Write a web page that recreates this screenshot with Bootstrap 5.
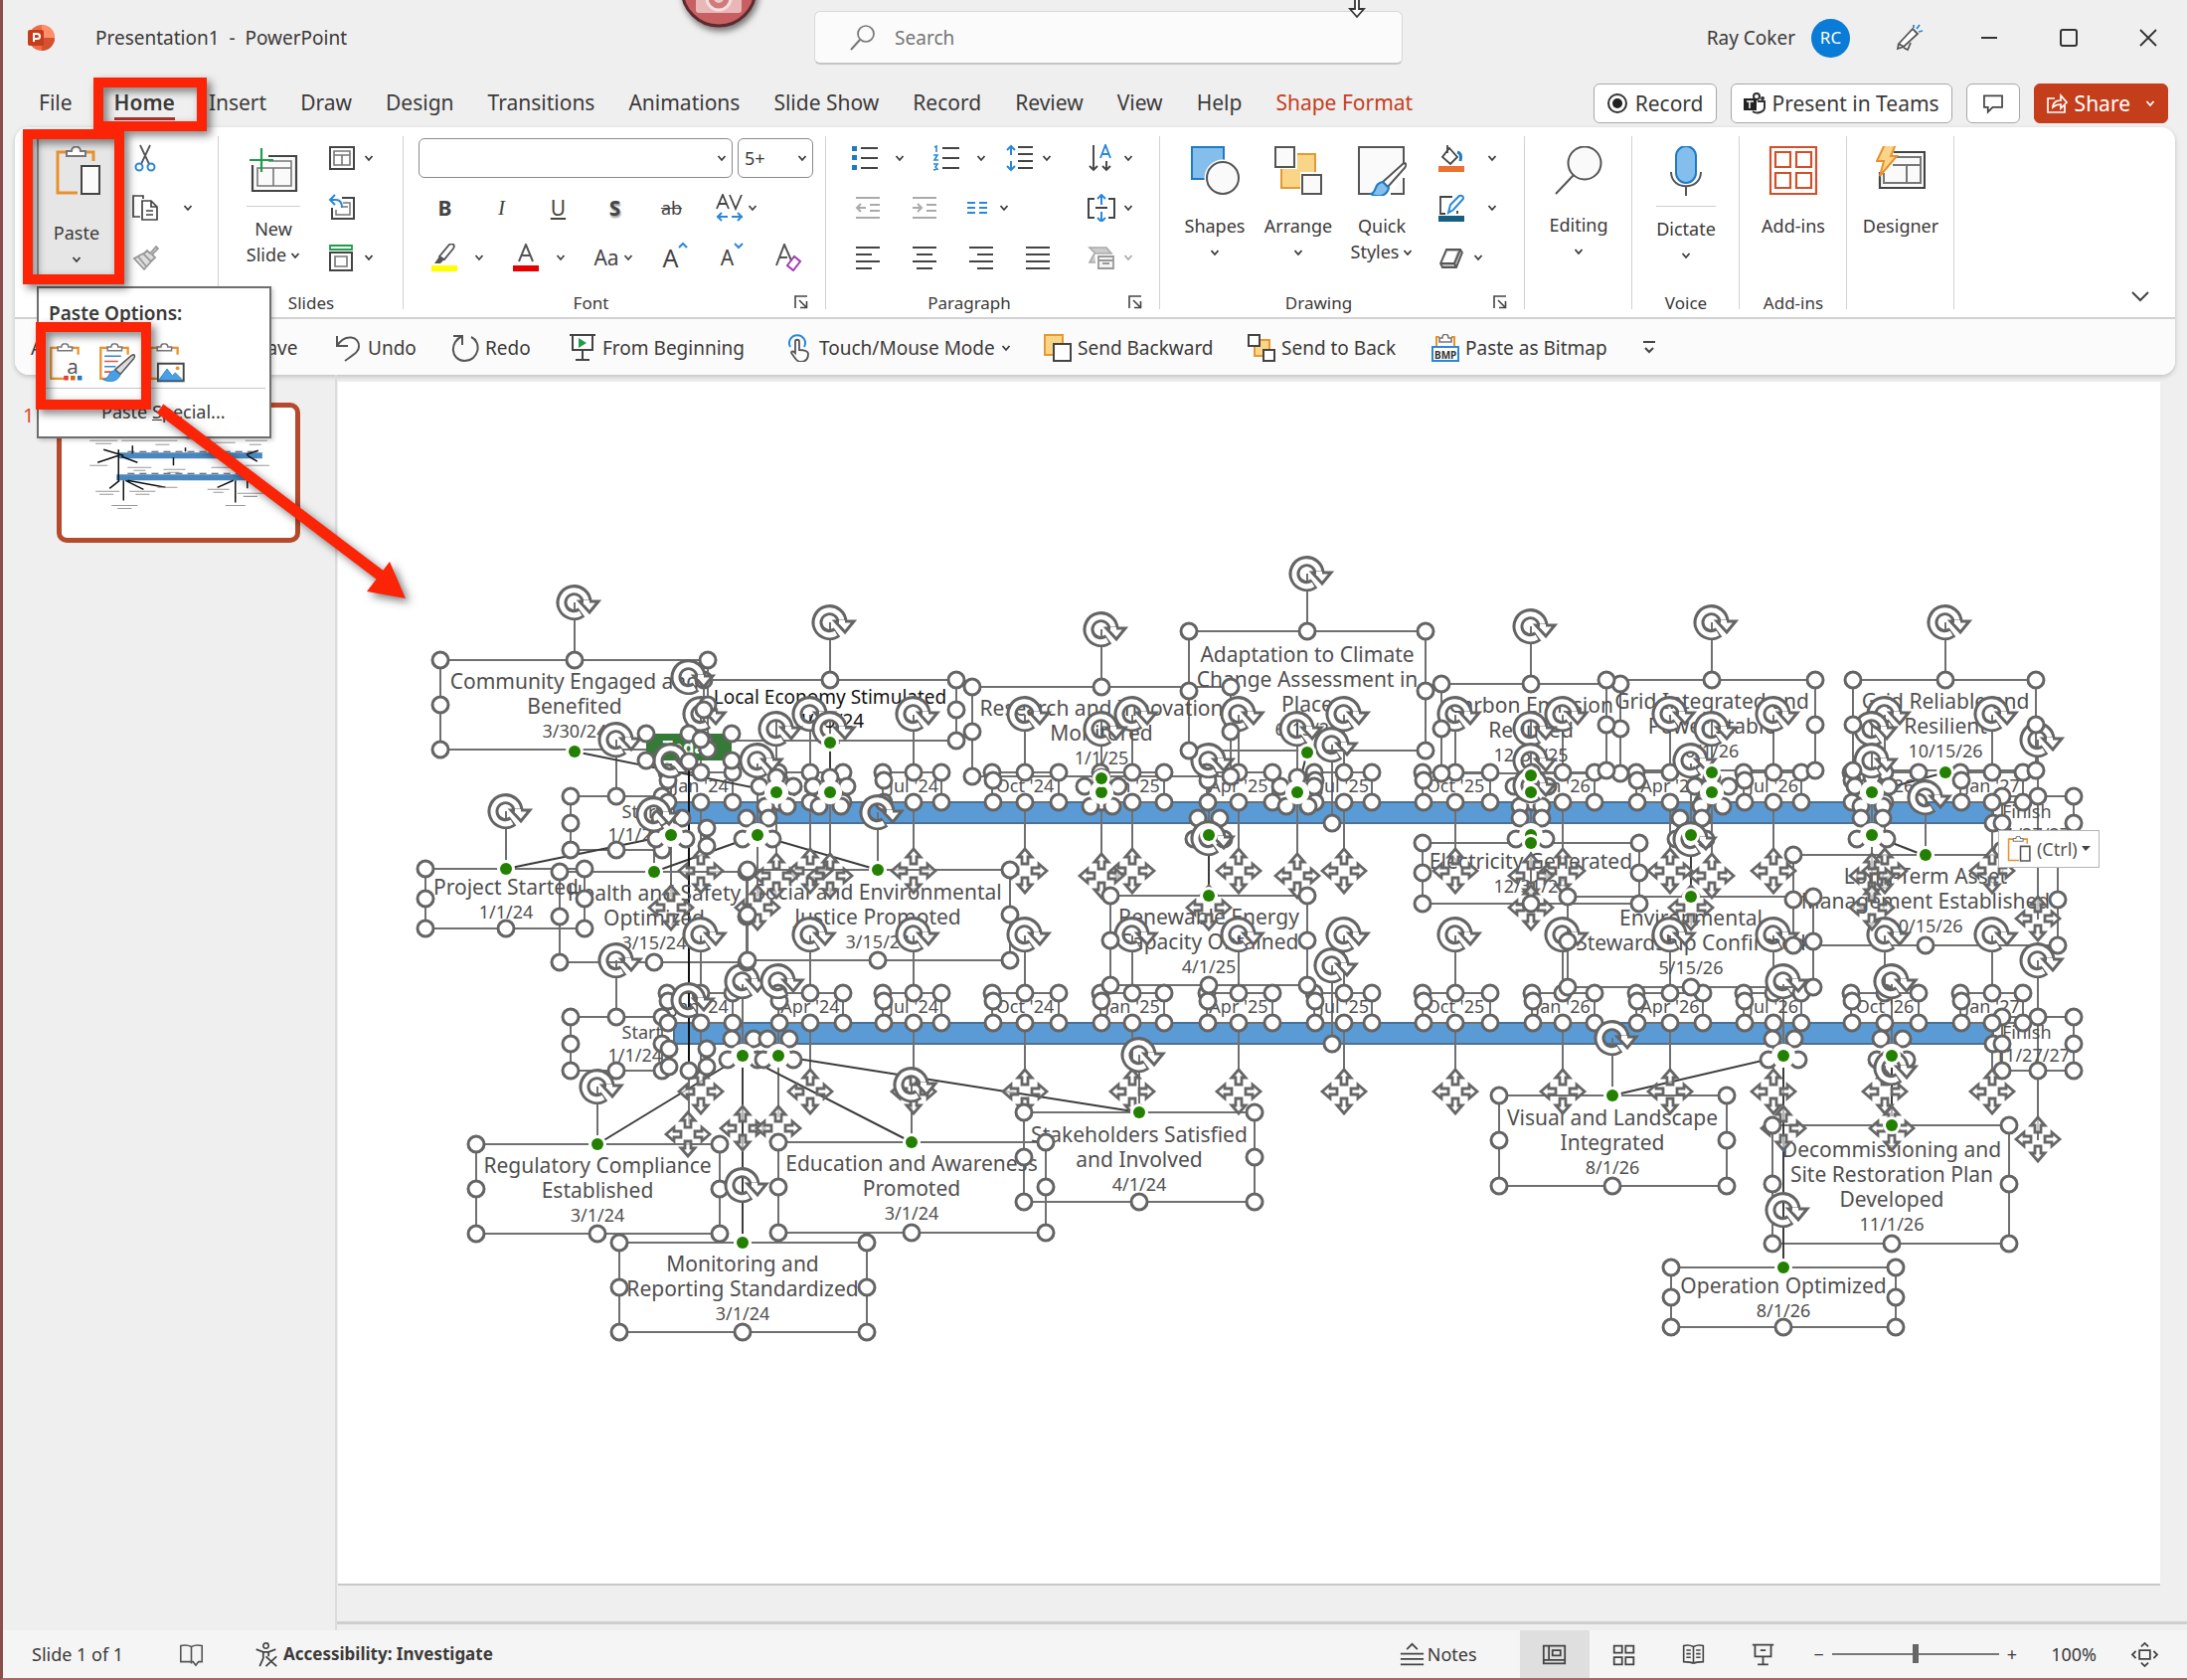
<!DOCTYPE html>
<html lang="en">
<head>
<meta charset="utf-8">
<meta name="viewport" content="width=device-width, initial-scale=1">
<title>Presentation1 - PowerPoint</title>
<link href="https://cdn.jsdelivr.net/npm/bootstrap@5.3.0/dist/css/bootstrap.min.css" rel="stylesheet">
<style>
:root{--ink:#3b3a39;--line:#d2d2d2;--brand:#c43e1c}
body{font-family:"Noto Sans","Open Sans",sans-serif;font-size:18px;line-height:26px;color:var(--ink);background:#efefef;border-left:3px solid #8a4f4d;border-bottom:2px solid #a86a68;min-height:100vh;overflow-x:hidden}
button{font:inherit;color:inherit;background:none;border:0;padding:0}
svg{display:block;flex:none;overflow:visible}
.defs{position:absolute}
.ico{width:28px;height:28px}
.big{width:50px;height:50px}
.chev{width:10px;height:10px}
.title-bar{height:76px;padding-left:24px;font-size:19px}
.doc-name{margin-left:41px;white-space:pre}
.search-wrap{width:592px;height:54px;background:#fbfbfb;border:1px solid #d8d8d8;border-bottom:2px solid #c4c4c4;border-radius:6px;padding-left:34px;margin-left:470px}
.search-wrap input{border:0;background:none;outline:0;color:#666;font-size:19px;width:400px}
.avatar{width:39px;height:39px;border-radius:50%;background:#0a7bd6;color:#fff;font-size:17px}
.win-btns{gap:52px;margin:0 25px 0 46px}
.tab-row{height:52px;padding:4px 19px 0 36px}
.tabs{gap:34px}
.tabs a{color:var(--ink);text-decoration:none;font-size:21px;line-height:30px}
.tabs .on{font-weight:600;border-bottom:3px solid #a33;margin-left:8px}
.tabs .ctx{color:var(--brand)}
.tab-actions{gap:14px}
.pill{height:40px;background:#fff;border:1px solid #a8a8a8;border-radius:6px;padding:0 12px;font-size:21px;gap:7px}
.pill.share{background:var(--brand);border-color:var(--brand);color:#fff}
.ribbon{margin:0 12px;background:#fff;border-radius:14px;box-shadow:0 2px 5px rgba(0,0,0,.2);height:249px}
.ribbon-main{height:193px;padding-top:6px;border-bottom:2px solid var(--line)}
.grp{position:relative;height:183px;flex:none}
.grp::after{content:"";position:absolute;right:0;top:3px;bottom:6px;width:1px;background:var(--line)}
.grp-name{text-align:center;line-height:24px;font-size:17px;margin-top:auto}
.launch{position:absolute;right:18px;bottom:6px}
.launch svg{width:14px;height:14px}
.r{height:50px;display:flex;align-items:center}
.r button{display:flex;align-items:center;justify-content:center;height:42px}
.w57{width:57px}.w82{width:82px;gap:16px}.w68{width:68px;gap:8px}.w73{width:73px;gap:4px}
.tall{display:flex;flex-direction:column;align-items:center;height:150px;padding-top:13px}
.tall .lab{margin-top:17px;line-height:26px;text-align:center}
.tall .low{margin-top:10px;border-top:1px solid #cfcfcf;padding-top:9px}
.tall .chev{margin-top:9px}
.lab .chev{display:inline-block;margin:0 0 2px 4px}
.g-clip{width:205px;padding-left:22px}.g-slides{width:186px}.g-font{width:425px}.g-para{width:336px}.g-draw{width:367px}.g-one{width:108px}
.paste-btn{width:78px;background:#e6e6e6;border-left:2px solid #999}
.paste-btn .big{margin-left:6px}
.paste-btn .lab{margin-top:24px}
.clip-col{margin-left:17px}
.new-btn{width:70px;margin:0 20px}
.draw-btn{width:84px}
.draw-row{padding-left:13px}
.draw-col{margin-left:14px}
.far{gap:22px}
.dim{color:#aaa}
.para-a{padding:0 22px 0 11px}.para-b{padding:0 22px 0 13px}
.font-a{padding:0 13px 0 15px;gap:5px}
.f-name,.f-size{height:40px;border:1px solid #8a8a8a;border-radius:6px;background:#fff;appearance:none;padding:0 6px;color:var(--ink);width:100%}
.combo{position:relative;width:316px}.combo.sm-box{width:76px}.combo .chev{position:absolute;right:6px;top:15px;pointer-events:none}
.glyph{font-size:21px;color:#444;padding-left:13px}
.ital{font-family:"Liberation Serif",serif}
.shade{text-shadow:1px 2px 2px #999}
.strike{font-size:18px}
.grow-a{font-size:25px}
.collapse-btn{margin:0 26px 12px 0}
.qat{height:56px;padding:2px 0 0 16px;font-size:19px;background:#fbfbfb;border-radius:0 0 14px 14px}
.qat button{display:flex;align-items:center;gap:6px}
.q1{width:227px}.q2{width:78px}.q3{width:118px}.q4{width:218px}.q5{width:260px}.q6{width:205px}.q7{width:185px}.q8{width:212px}
.work{flex:1 1 auto;min-height:0}
.pane{width:336px;border-right:2px solid #dcdcdc;padding:28px 35px 0 14px}
.s-num{color:#e0452c;width:40px;font-size:20px;padding-left:6px}
.thumb{width:245px;border:5px solid #b54a2c;border-radius:10px;background:#fff;overflow:hidden}
.thumb svg{width:100%;height:auto}
.stage{flex:1 1 auto;padding:7px 27px 0 1px;border-bottom:3px solid #cfcfcf;margin-bottom:6px}
.slide{position:relative;background:#fff;border-bottom:2px solid #c8c8c8}
.slide>svg{width:100%;height:auto}
.slide text{font-size:21px;fill:#505050;text-anchor:middle}
.slide text.dt,.slide text.tick{font-size:18px}
.slide text.own{font-size:19px;fill:#111}
.slide text.today{fill:#fff;font-weight:700}
.slide text.lt{text-anchor:start}.slide text.rt{text-anchor:end}
.ctrl-btn{position:absolute;left:91.1%;top:37.3%;width:102px;height:38px;background:#fff;border:1px solid #b5b5b5;display:flex;align-items:center;justify-content:center;gap:4px;font-size:18px;color:#555}
.status{height:48px;background:#f5f5f5;font-size:18px;padding-left:29px}
.count{width:148px}
.a11y{margin-left:50px;gap:5px;font-weight:700;font-size:17px}
.notes{gap:3px;margin-right:43px}
.status .view{width:70px;height:48px;display:flex;align-items:center;justify-content:center}
.status .view.on{background:#dfdfdf}
.status .ico{width:25px;height:25px}
.minus{margin-left:16px}
.pct{margin:0 36px 0 34px}
.status .fit{margin-right:30px}
.zoom-range{width:168px;height:20px;appearance:none;background:none}
.zoom-range::-webkit-slider-runnable-track{height:2px;background:#777}
.zoom-range::-webkit-slider-thumb{appearance:none;width:6px;height:19px;margin-top:-9px;background:#666;border:0}
.paste-menu{position:absolute;left:37px;top:288px;width:236px;height:153px;background:#fff;border:2px solid #6e6e6e;z-index:3;padding:12px 4px 0;box-shadow:2px 2px 4px rgba(0,0,0,.2)}
.paste-menu h6{font-size:19px;line-height:26px;margin:0 0 17px 6px;font-weight:600}
.paste-menu .opts{gap:12px;padding:0 0 5px 6px;border-bottom:1px solid #c8c8c8}
.paste-menu .opts svg{width:38px;height:40px}
.paste-menu .sp{margin-left:59px;margin-top:9px;line-height:28px}
.marks{position:absolute;left:0;top:0;width:420px;height:620px;z-index:4;pointer-events:none}
.marks g{filter:drop-shadow(4px 4px 4px rgba(0,0,0,.5))}
.cam{position:absolute;left:684px;top:-50px;width:78px;height:78px;z-index:4;filter:drop-shadow(2px 4px 3px rgba(0,0,0,.5))}
.cur{position:absolute;left:1356px;top:0;width:18px;height:18px;z-index:4}
</style>
<script src="https://cdn.jsdelivr.net/npm/bootstrap@5.3.0/dist/js/bootstrap.bundle.min.js"></script>
</head>
<body class="d-flex flex-column">
<svg class="defs" width="0" height="0" aria-hidden="true">
<defs>
<symbol id="chev" viewBox="0 0 10 10"><path d="M1.5 3 5 7l3.5-4" fill="none" stroke="currentColor" stroke-width="1.8"/></symbol>
<symbol id="up" viewBox="0 0 10 10"><path d="M1 7l4-4 4 4" fill="none" stroke="#2b88d8" stroke-width="2"/></symbol>
<symbol id="down" viewBox="0 0 10 10"><path d="M1 3l4 4 4-4" fill="none" stroke="#2b88d8" stroke-width="2"/></symbol>
<symbol id="launch" viewBox="0 0 14 14"><path d="M1 13V1h12M5 5l7 7M12.5 6v6.5H6" fill="none" stroke="#444" stroke-width="1.6"/></symbol>
<symbol id="clip" viewBox="0 0 50 50"><path d="M12 6H3v41h20M31 6h8v9" fill="none" stroke="#e8912d" stroke-width="3"/><path d="M12 10V5h5c0-6 9-6 9 0h5v5z" fill="#fff" stroke="#777" stroke-width="2"/></symbol>
<symbol id="cut" viewBox="0 0 28 28"><path d="M9 1l9 19M19 1l-9 19" stroke="#555" stroke-width="1.8" fill="none"/><circle cx="8" cy="23" r="3.5" fill="none" stroke="#2b88d8" stroke-width="2"/><circle cx="20" cy="23" r="3.5" fill="none" stroke="#2b88d8" stroke-width="2"/></symbol>
<symbol id="copy" viewBox="0 0 28 28"><path d="M12 5V2H2v21h7M11 7h9l6 6v13H11zM20 7v6h6M15 17h7M15 21h7" fill="none" stroke="#444" stroke-width="1.7"/></symbol>
<symbol id="brush" viewBox="0 0 28 28"><path d="M3 15l9-5 8 8-7 8zM13 10l3-3 3 3 6-7 2 2-6 6 3 3-4 4M7 13l8 10" fill="#ddd" stroke="#999" stroke-width="1.8"/></symbol>
<symbol id="newslide" viewBox="0 0 50 50"><path d="M20 10h28v35H4V19" fill="#fafafa" stroke="#444" stroke-width="2.2"/><path d="M20 15h23v25H9V22h34M25 22v18" fill="none" stroke="#777" stroke-width="1.6"/><path d="M13 2v24M1 14h24" stroke="#1f9c4c" stroke-width="2.2"/></symbol>
<symbol id="layout" viewBox="0 0 28 28"><path d="M2 3h24v22H2z" fill="none" stroke="#444" stroke-width="2"/><path d="M6 7h16v14H6zM6 11h16M14 11v10" fill="none" stroke="#777" stroke-width="1.6"/></symbol>
<symbol id="reset" viewBox="0 0 28 28"><path d="M14 4h12v21H4V14" fill="none" stroke="#444" stroke-width="2"/><path d="M15 9h7v12H8v-5M14 13h6" fill="none" stroke="#777" stroke-width="1.5"/><path d="M7 1 2 6l5 5M2 6h6c5 0 6 4 6 8" fill="none" stroke="#2b88d8" stroke-width="2"/></symbol>
<symbol id="section" viewBox="0 0 28 28"><path d="M2 2h22v4H2z" fill="none" stroke="#1f9c4c" stroke-width="1.8"/><path d="M2 9h22v18H2z" fill="none" stroke="#444" stroke-width="2"/><path d="M7 13h12v10H7z" fill="none" stroke="#777" stroke-width="1.6"/></symbol>
<symbol id="hilite" viewBox="0 0 28 28"><path d="M9 13 19 1c4-2 6 1 4 4L14 16z" fill="#fff" stroke="#555" stroke-width="1.8"/><path d="M9 13l-5 7h6l4-4z" fill="#555"/><path d="M1 22h26v7H1z" fill="#ff0"/></symbol>
<symbol id="fcolor" viewBox="0 0 28 28"><path d="M7 18 14 1l7 17M9.5 12h9" fill="none" stroke="#555" stroke-width="2"/><path d="M1 22h26v7H1z" fill="#e60000"/></symbol>
<symbol id="clearf" viewBox="0 0 28 28"><path d="M1 22 9 1l7 16M4 14h8" fill="none" stroke="#555" stroke-width="2"/><path d="M12 22l7-9 6 5-7 9z" fill="#fff" stroke="#a43cb4" stroke-width="2"/></symbol>
<symbol id="avsp" viewBox="0 0 28 28"><path d="M1 15 7 1l6 14M3 10h8M14 1l6 14 6-14" fill="none" stroke="#444" stroke-width="1.8"/><path d="M1 23h11M16 23h11M6 19l-4 4 4 4M22 19l4 4-4 4" fill="none" stroke="#2b88d8" stroke-width="2"/></symbol>
<symbol id="bul" viewBox="0 0 28 28"><path d="M1 2h5v5H1zM1 11h5v5H1zM1 21h5v5H1z" fill="#1b7ac4"/><path d="M10 4h17M10 14h17M10 24h17" stroke="#444" stroke-width="2"/></symbol>
<symbol id="num" viewBox="0 0 28 28"><path d="M2 3l2-1v6M1 11h4l-3 5h4M1 20h4l-2 3 2 2-4 1" fill="none" stroke="#2b88d8" stroke-width="1.6"/><path d="M10 4h17M10 14h17M10 24h17" stroke="#444" stroke-width="2"/></symbol>
<symbol id="spacing" viewBox="0 0 28 28"><path d="M5 3v8M5 25v-8M1 6l4-4 4 4M1 22l4 4 4-4" fill="none" stroke="#2b88d8" stroke-width="2"/><path d="M12 3h15M12 10h15M12 17h15M12 24h15" stroke="#444" stroke-width="2"/></symbol>
<symbol id="tdir" viewBox="0 0 28 28"><path d="M6 1v25M2 22l4 4 4-4M19 17v9M15 22l4 4 4-4" fill="none" stroke="#444" stroke-width="1.9"/><path d="M13 14 18 1l5 13M15 10h6" fill="none" stroke="#2b88d8" stroke-width="1.9"/></symbol>
<symbol id="ind" viewBox="0 0 28 28"><path d="M2 4h24M16 11h10M16 17h10M2 24h24M12 14H3M7 10l-4 4 4 4" fill="none" stroke="#aaa" stroke-width="2"/></symbol>
<symbol id="indr" viewBox="0 0 28 28"><path d="M2 4h24M16 11h10M16 17h10M2 24h24M2 14h9M7 10l4 4-4 4" fill="none" stroke="#aaa" stroke-width="2"/></symbol>
<symbol id="cols" viewBox="0 0 28 28"><path d="M4 9h8M4 14h8M4 19h8M16 9h8M16 14h8M16 19h8" stroke="#2b88d8" stroke-width="2"/></symbol>
<symbol id="valign" viewBox="0 0 28 28"><path d="M7 5H1v19h6M21 5h6v19h-6M8 14h12" fill="none" stroke="#444" stroke-width="2"/><path d="M14 1v10M14 28V18M10 5l4-4 4 4M10 24l4 4 4-4" fill="none" stroke="#2b88d8" stroke-width="2"/></symbol>
<symbol id="al" viewBox="0 0 28 28"><path d="M2 4h24M2 11h16M2 18h24M2 25h16" stroke="#444" stroke-width="2"/></symbol>
<symbol id="ac" viewBox="0 0 28 28"><path d="M2 4h24M6 11h16M2 18h24M6 25h16" stroke="#444" stroke-width="2"/></symbol>
<symbol id="ar" viewBox="0 0 28 28"><path d="M2 4h24M10 11h16M2 18h24M10 25h16" stroke="#444" stroke-width="2"/></symbol>
<symbol id="aj" viewBox="0 0 28 28"><path d="M2 4h24M2 11h24M2 18h24M2 25h24" stroke="#444" stroke-width="2"/></symbol>
<symbol id="smart" viewBox="0 0 28 28"><path d="M2 4h17l5 6H8zM7 10l-5 9h6" fill="#ccc" stroke="#aaa" stroke-width="1.6"/><path d="M11 13h15v12H11zM11 17h15M15 20h7" fill="#f4f4f4" stroke="#999" stroke-width="1.8"/></symbol>
<symbol id="shapes" viewBox="0 0 50 50"><path d="M2 1h32v32H2z" fill="#83beec" stroke="#1f7ac2" stroke-width="2"/><circle cx="33" cy="32" r="18.5" fill="#fff"/><circle cx="33" cy="32" r="16" fill="#fafafa" stroke="#555" stroke-width="2"/></symbol>
<symbol id="arrange" viewBox="0 0 50 50"><path d="M8 8h34v34H8z" fill="#fad587" stroke="#e39a31" stroke-width="2"/><path d="M0-1h24v24H0zM27 26h23v23H27z" fill="#fff"/><path d="M2 1h19v20H2zM29 29h19v19H29z" fill="#fafafa" stroke="#555" stroke-width="2"/></symbol>
<symbol id="quick" viewBox="0 0 50 50"><path d="M47 20V1H2v47h12M34 48h13V32" fill="#fafafa" stroke="#555" stroke-width="2"/><path d="M26 36 46 18c4-2 4 1 2 4L31 41z" fill="#fff" stroke="#555" stroke-width="2"/><path d="M14 48c6-1 3-11 12-12l6 6c-2 9-12 10-18 6z" fill="#83beec" stroke="#1f7ac2" stroke-width="2"/></symbol>
<symbol id="fill" viewBox="0 0 28 28"><path d="M12 4l8 9-7 7-8-7zM10 1v8" fill="none" stroke="#444" stroke-width="1.8"/><path d="M20 8c4 1 4 5 3 9" fill="none" stroke="#1f7ac2" stroke-width="3"/><path d="M1 22h26v7H1z" fill="#e97132"/></symbol>
<symbol id="outl" viewBox="0 0 28 28"><path d="M15 3H3v17h5M20 17v3" fill="none" stroke="#444" stroke-width="1.8"/><path d="M11 19l2-8 9-9c4-1 5 2 3 4l-9 10z" fill="#fff" stroke="#2b88d8" stroke-width="2"/><path d="M1 22h26v7H1z" fill="#156082"/></symbol>
<symbol id="cube" viewBox="0 0 28 28"><path d="M3 20 9 6h14l2 3-6 15H5z" fill="#bbb" stroke="#555" stroke-width="1.8"/><path d="M3 20h14l6-14M17 20l2 4" fill="none" stroke="#555" stroke-width="1.8"/><path d="M5 19 10 8h10l-4 11z" fill="#fff"/></symbol>
<symbol id="lens" viewBox="0 0 50 50"><circle cx="31" cy="17" r="16.5" fill="#fafafa" stroke="#555" stroke-width="2"/><path d="M20 29 2 48" stroke="#555" stroke-width="2"/></symbol>
<symbol id="mic" viewBox="0 0 50 50"><rect x="15" y="0" width="20" height="37" rx="10" fill="#83beec" stroke="#1f7ac2" stroke-width="2"/><path d="M10 26c0 19 30 19 30 0M25 41v9" fill="none" stroke="#555" stroke-width="2"/></symbol>
<symbol id="addin" viewBox="0 0 50 50"><path d="M2 1h46v47H2zM7 6h15v15H7zM28 6h15v15H28zM7 27h15v15H7zM28 27h15v15H28z" fill="none" stroke="#d0502a" stroke-width="2.2"/></symbol>
<symbol id="design" viewBox="0 0 50 50"><path d="M18 6h31v36H4V26" fill="#fafafa" stroke="#444" stroke-width="2.2"/><path d="M19 11h26v26H8V27M17 19h28M31 19v18" fill="none" stroke="#777" stroke-width="2"/><path d="M9-2h11l-5 12h6L4 30l4-15H1z" fill="#fad587" stroke="#e8912d" stroke-width="2"/></symbol>
<symbol id="glass" viewBox="0 0 28 28"><circle cx="17" cy="10" r="8" fill="none" stroke="#777" stroke-width="1.7"/><path d="M11 16 2 26" stroke="#777" stroke-width="2"/></symbol>
<symbol id="undo" viewBox="0 0 28 28"><path d="M3 2v10h11M3 12C11-1 26 2 25 13c0 5-6 8-14 14" fill="none" stroke="#555" stroke-width="2"/></symbol>
<symbol id="redo" viewBox="0 0 28 28"><path d="M2 2h9v9M11 2C-2 8-1 26 13 27c15 0 18-19 7-24" fill="none" stroke="#555" stroke-width="2"/></symbol>
<symbol id="play" viewBox="0 0 28 28"><path d="M1 1h26M4 1v15h20V1M14 16v10M7 26h14" fill="#fff" stroke="#444" stroke-width="2"/><path d="M10 4l8 5-8 5z" fill="#1f9c4c"/></symbol>
<symbol id="touch" viewBox="0 0 28 28"><path d="M5 13a8 8 0 1 1 14 0" fill="none" stroke="#2b88d8" stroke-width="2"/><path d="M10 19V8c0-3 4-3 4 0v8c4 0 9 1 9 4 0 6-3 8-8 8-4 0-5-4-9-9 0-2 2-2 4 0z" fill="#fff" stroke="#555" stroke-width="1.8"/></symbol>
<symbol id="sback" viewBox="0 0 28 28"><path d="M1 1h18v20H1z" fill="#fad587" stroke="#e39a31" stroke-width="2"/><path d="M10 10h17v17H10z" fill="#fff" stroke="#444" stroke-width="2"/></symbol>
<symbol id="sback2" viewBox="0 0 28 28"><path d="M7 6h15v16H7z" fill="#fad587" stroke="#e39a31" stroke-width="2"/><path d="M1 1h11v11H1zM16 16h11v11H16z" fill="#fff" stroke="#444" stroke-width="2"/></symbol>
<symbol id="bmp" viewBox="0 0 28 28"><path d="M8 3H5v10M20 3h3v10" fill="none" stroke="#e8912d" stroke-width="2"/><path d="M8 8V4h3c0-5 6-5 6 0h3v4z" fill="#fff" stroke="#777" stroke-width="1.6"/><path d="M1 13h26v14H1z" fill="#fff" stroke="#2b88d8" stroke-width="2"/></symbol>
<g id="rot"><path d="M12 0A12.5 12.5 0 1 0 7 10" fill="none" stroke="#646464" stroke-width="11"/><path d="M12 0A12.5 12.5 0 1 0 6 11" fill="none" stroke="#fff" stroke-width="5"/><path d="M5-1h19L15 10z" fill="#fff" stroke="#646464" stroke-width="3"/><path d="M9-2h6v4H9z" fill="#fff"/></g>
<g id="mv"><g id="mva"><path d="M0-22l7 8H3v7h-6v-7h-4z" fill="#fff" fill-opacity=".6" stroke="#666" stroke-width="2.8"/></g><use href="#mva" transform="rotate(90)"/><use href="#mva" transform="rotate(180)"/><use href="#mva" transform="rotate(270)"/></g>
<circle id="hd" r="8" fill="#fff" stroke="#646464" stroke-width="3"/>
<g id="dot"><circle r="9" fill="#fff"/><circle r="6" fill="#238000"/></g>
</defs>
</svg>

<header class="title-bar d-flex align-items-center">
  <svg width="28" height="28" viewBox="0 0 28 28"><circle cx="15" cy="14" r="13" fill="#ed6c47"/><path d="M15 1a13 13 0 0 1 13 13H15z" fill="#ff8f6b"/><path d="M15 27a13 13 0 0 0 13-13H15z" fill="#d35230"/><rect x="1" y="6" width="16" height="16" rx="2" fill="#c43e1c"/><path d="M7 18v-8h3.5a2.5 2.5 0 0 1 0 5H7" fill="none" stroke="#fff" stroke-width="2"/></svg>
  <span class="doc-name">Presentation1  -  PowerPoint</span>
  <label class="search-wrap d-flex align-items-center gap-3"><svg class="ico"><use href="#glass"/></svg><input type="text" placeholder="Search" aria-label="Search"></label>
  <span class="ms-auto me-3">Ray Coker</span>
  <span class="avatar d-flex align-items-center justify-content-center">RC</span>
  <div class="d-flex align-items-center win-btns">
    <button aria-label="Coming soon"><svg class="ico" viewBox="0 0 28 28"><path d="M3 20 17 5l5 5L8 23zM3 20l-1 5 6-2M8 24l4 2 3-7" fill="#fff" stroke="#555" stroke-width="1.8"/><path d="M18 4V1M21 5l3-4M23 8l4-1" stroke="#2b88d8" stroke-width="1.8"/></svg></button>
    <button aria-label="Minimize"><svg class="ico" viewBox="0 0 28 28"><path d="M6 14h16" stroke="#333" stroke-width="2"/></svg></button>
    <button aria-label="Maximize"><svg class="ico" viewBox="0 0 28 28"><rect x="6" y="6" width="16" height="16" rx="2" fill="none" stroke="#333" stroke-width="2"/></svg></button>
    <button aria-label="Close"><svg class="ico" viewBox="0 0 28 28"><path d="M6 6l16 16M22 6 6 22" stroke="#333" stroke-width="1.8"/></svg></button>
  </div>
</header>

<nav class="tab-row d-flex align-items-center">
  <div class="tabs d-flex"><a href="#">File</a><a href="#" class="on">Home</a><a href="#">Insert</a><a href="#">Draw</a><a href="#">Design</a><a href="#">Transitions</a><a href="#">Animations</a><a href="#">Slide Show</a><a href="#">Record</a><a href="#">Review</a><a href="#">View</a><a href="#">Help</a><a href="#" class="ctx">Shape Format</a></div>
  <div class="ms-auto d-flex tab-actions">
    <button class="pill d-flex align-items-center"><svg width="22" height="22" viewBox="0 0 22 22"><circle cx="11" cy="11" r="9" fill="none" stroke="#333" stroke-width="2"/><circle cx="11" cy="11" r="5" fill="#222"/></svg>Record</button>
    <button class="pill d-flex align-items-center"><svg width="22" height="22" viewBox="0 0 22 22"><circle cx="13" cy="4" r="3" fill="none" stroke="#333" stroke-width="2"/><circle cx="19" cy="6" r="2" fill="#333"/><path d="M14 9h7v6c0 5-8 7-12 4" fill="none" stroke="#333" stroke-width="2"/><rect y="6" width="13" height="12" fill="#222"/><path d="M3 9h7M6 9v7" stroke="#fff" stroke-width="1.5"/></svg>Present in Teams</button>
    <button class="pill d-flex align-items-center px-3" aria-label="Comments"><svg width="20" height="20" viewBox="0 0 21 20"><path d="M1 2h19v12H10l-5 5v-5H1z" fill="none" stroke="#444" stroke-width="1.8"/></svg></button>
    <button class="pill share d-flex align-items-center"><svg width="21" height="20" viewBox="0 0 21 20"><path d="M8 5H1v14h17v-7M6 14c0-6 5-7 8-7V2l6 7-6 6v-4c-4 0-6 1-8 3z" fill="none" stroke="#fff" stroke-width="1.7"/></svg>Share<svg class="chev ms-2"><use href="#chev"/></svg></button>
  </div>
</nav>

<section class="ribbon">
 <div class="ribbon-main d-flex">
  <div class="grp g-clip d-flex">
    <button class="tall paste-btn"><svg class="big"><use href="#clip"/><path d="M27 20h18v28H27z" fill="#fafafa" stroke="#444" stroke-width="2"/></svg><span class="lab">Paste</span><svg class="chev"><use href="#chev"/></svg></button>
    <div class="clip-col"><div class="r"><button aria-label="Cut"><svg class="ico"><use href="#cut"/></svg></button></div><div class="r"><button class="gap-4" aria-label="Copy"><svg class="ico"><use href="#copy"/></svg><svg class="chev"><use href="#chev"/></svg></button></div><div class="r"><button aria-label="Format Painter"><svg class="ico"><use href="#brush"/></svg></button></div></div>
  </div>
  <div class="grp g-slides d-flex flex-column">
    <div class="d-flex"><button class="tall new-btn"><svg class="big"><use href="#newslide"/></svg><span class="lab low">New<br>Slide<svg class="chev"><use href="#chev"/></svg></span></button>
    <div><div class="r"><button class="w57 justify-content-start gap-2" aria-label="Layout"><svg class="ico"><use href="#layout"/></svg><svg class="chev"><use href="#chev"/></svg></button></div><div class="r"><button aria-label="Reset"><svg class="ico"><use href="#reset"/></svg></button></div><div class="r"><button class="w57 justify-content-start gap-2" aria-label="Section"><svg class="ico"><use href="#section"/></svg><svg class="chev"><use href="#chev"/></svg></button></div></div></div>
    <div class="grp-name">Slides</div>
  </div>
  <div class="grp g-font d-flex flex-column">
    <div class="r font-a"><label class="combo"><select class="f-name" aria-label="Font"><option></option></select><svg class="chev"><use href="#chev"/></svg></label><label class="combo sm-box"><select class="f-size" aria-label="Font size"><option>5+</option></select><svg class="chev"><use href="#chev"/></svg></label></div>
    <div class="r glyph"><button class="w57"><b>B</b></button><button class="w57"><i class="ital">I</i></button><button class="w57"><u>U</u></button><button class="w57"><b class="shade">S</b></button><button class="w57"><s class="strike">ab</s></button><button class="w73" aria-label="Character spacing"><svg class="ico"><use href="#avsp"/></svg><svg class="chev"><use href="#chev"/></svg></button></div>
    <div class="r glyph"><button class="w82" aria-label="Highlight"><svg class="ico"><use href="#hilite"/></svg><svg class="chev"><use href="#chev"/></svg></button><button class="w82" aria-label="Font color"><svg class="ico"><use href="#fcolor"/></svg><svg class="chev"><use href="#chev"/></svg></button><button class="w68 gap-1">Aa<svg class="chev"><use href="#chev"/></svg></button><button class="w57 grow-a" aria-label="Grow font">A<svg class="chev align-self-start mt-1"><use href="#up"/></svg></button><button class="w57" aria-label="Shrink font">A<svg class="chev align-self-start mt-1"><use href="#down"/></svg></button><button class="w57" aria-label="Clear formatting"><svg class="ico"><use href="#clearf"/></svg></button></div>
    <div class="grp-name pe-5">Font</div><button class="launch" aria-label="Font settings"><svg><use href="#launch"/></svg></button>
  </div>
  <div class="grp g-para d-flex flex-column">
    <div class="r para-a"><button class="w82" aria-label="Bullets"><svg class="ico"><use href="#bul"/></svg><svg class="chev"><use href="#chev"/></svg></button><button class="w82" aria-label="Numbering"><svg class="ico"><use href="#num"/></svg><svg class="chev"><use href="#chev"/></svg></button><button class="w57 gap-2" aria-label="Line spacing"><svg class="ico"><use href="#spacing"/></svg><svg class="chev"><use href="#chev"/></svg></button><button class="w57 ms-auto gap-2" aria-label="Text direction"><svg class="ico"><use href="#tdir"/></svg><svg class="chev"><use href="#chev"/></svg></button></div>
    <div class="r para-b"><button class="w57" aria-label="Decrease indent"><svg class="ico"><use href="#ind"/></svg></button><button class="w57" aria-label="Increase indent"><svg class="ico"><use href="#indr"/></svg></button><button class="w68" aria-label="Columns"><svg class="ico"><use href="#cols"/></svg><svg class="chev"><use href="#chev"/></svg></button><button class="w57 ms-auto gap-2" aria-label="Align text"><svg class="ico"><use href="#valign"/></svg><svg class="chev"><use href="#chev"/></svg></button></div>
    <div class="r para-b"><button class="w57" aria-label="Left"><svg class="ico"><use href="#al"/></svg></button><button class="w57" aria-label="Center"><svg class="ico"><use href="#ac"/></svg></button><button class="w57" aria-label="Right"><svg class="ico"><use href="#ar"/></svg></button><button class="w57" aria-label="Justify"><svg class="ico"><use href="#aj"/></svg></button><button class="w57 ms-auto gap-2 dim" aria-label="SmartArt"><svg class="ico"><use href="#smart"/></svg><svg class="chev"><use href="#chev"/></svg></button></div>
    <div class="grp-name pe-5">Paragraph</div><button class="launch" aria-label="Paragraph settings"><svg><use href="#launch"/></svg></button>
  </div>
  <div class="grp g-draw d-flex flex-column">
    <div class="d-flex draw-row"><button class="tall draw-btn"><svg class="big"><use href="#shapes"/></svg><span class="lab">Shapes</span><svg class="chev"><use href="#chev"/></svg></button><button class="tall draw-btn"><svg class="big"><use href="#arrange"/></svg><span class="lab">Arrange</span><svg class="chev"><use href="#chev"/></svg></button><button class="tall draw-btn"><svg class="big"><use href="#quick"/></svg><span class="lab">Quick<br>Styles<svg class="chev"><use href="#chev"/></svg></span></button>
    <div class="draw-col"><div class="r"><button class="far" aria-label="Shape fill"><svg class="ico"><use href="#fill"/></svg><svg class="chev"><use href="#chev"/></svg></button></div><div class="r"><button class="far" aria-label="Shape outline"><svg class="ico"><use href="#outl"/></svg><svg class="chev"><use href="#chev"/></svg></button></div><div class="r"><button class="gap-2" aria-label="Shape effects"><svg class="ico"><use href="#cube"/></svg><svg class="chev"><use href="#chev"/></svg></button></div></div></div>
    <div class="grp-name pe-5">Drawing</div><button class="launch" aria-label="Drawing settings"><svg><use href="#launch"/></svg></button>
  </div>
  <div class="grp g-one d-flex flex-column"><button class="tall w-100"><svg class="big"><use href="#lens"/></svg><span class="lab mt-3">Editing</span><svg class="chev"><use href="#chev"/></svg></button></div>
  <div class="grp g-one d-flex flex-column"><button class="tall w-100"><svg class="big"><use href="#mic"/></svg><span class="lab low">Dictate</span><svg class="chev"><use href="#chev"/></svg></button><div class="grp-name">Voice</div></div>
  <div class="grp g-one d-flex flex-column"><button class="tall w-100"><svg class="big"><use href="#addin"/></svg><span class="lab">Add-ins</span></button><div class="grp-name">Add-ins</div></div>
  <div class="grp g-one d-flex flex-column"><button class="tall w-100"><svg class="big"><use href="#design"/></svg><span class="lab">Designer</span></button></div>
  <button class="ms-auto align-self-end collapse-btn" aria-label="Collapse ribbon"><svg width="18" height="18" viewBox="0 0 18 18"><path d="M1 5l8 8 8-8" fill="none" stroke="#444" stroke-width="2"/></svg></button>
 </div>
 <div class="qat d-flex align-items-center">
  <span class="q1">AutoSave</span><button class="q2">Save</button>
  <button class="q3"><svg class="ico"><use href="#undo"/></svg>Undo</button>
  <button class="q3"><svg class="ico"><use href="#redo"/></svg>Redo</button>
  <button class="q4"><svg class="ico"><use href="#play"/></svg>From Beginning</button>
  <button class="q5"><svg class="ico"><use href="#touch"/></svg>Touch/Mouse Mode<svg class="chev"><use href="#chev"/></svg></button>
  <button class="q6"><svg class="ico"><use href="#sback"/></svg>Send Backward</button>
  <button class="q7"><svg class="ico"><use href="#sback2"/></svg>Send to Back</button>
  <button class="q8"><svg class="ico"><use href="#bmp"/><text x="3" y="25" font-size="10" font-weight="700" fill="#333">BMP</text></svg>Paste as Bitmap</button>
  <button aria-label="More"><svg width="14" height="16" viewBox="0 0 14 16"><path d="M1 2h12M3 8l4 4 4-4" fill="none" stroke="#444" stroke-width="2"/></svg></button>
 </div>
</section>

<main class="work d-flex">
  <aside class="pane d-flex"><span class="s-num">1</span>
    <div><div class="thumb"><svg viewBox="0 0 234 130"><g stroke="#4a87bf" stroke-width="6"><path d="M57 48h144M55 70h140"/></g><path d="M57 42v32M42 42l20 6M57 48 36 55M60 49l16 6M71 38v8M112 50v8M124 44v-4M185 47l12-4M186 48l10 6M58 73 48 81M62 73v20M64 73l18 9M66 73l38 7M172 73l-16 7M174 73v22M186 73v8" stroke="#111" stroke-width="1.5" fill="none"/><g stroke="#999" stroke-width="1"><path d="M28 33h28M34 36h16M60 33h30M88 33h28M94 37h14M125 31h24M150 35h24M184 33h22M188 37h12M28 58h18M66 60h24M72 63h12M102 62h22M106 65h12M150 60h30M184 58h24M34 84h24M38 87h14M68 84h26M74 87h14M96 80h20M50 98h26M56 101h14M146 82h22M152 85h10M176 86h26M182 89h14M164 98h20"/><path d="M66 44h130M66 66h130" stroke-dasharray="7 5" stroke="#445"/></g></svg></div></div>
  </aside>
  <div class="stage"><div class="slide"><svg id="scene" viewBox="340 383 1833 1209" role="img" aria-label="Project timeline"></svg>
    <button class="ctrl-btn"><svg width="26" height="28" viewBox="0 0 50 50"><use href="#clip" width="50" height="50"/><path d="M26 20h18v28H26z" fill="#fff" stroke="#555" stroke-width="3"/></svg>(Ctrl)<svg width="9" height="6"><path d="M0 0h9L4 5z" fill="#444"/></svg></button></div></div>
</main>

<footer class="status d-flex align-items-center">
  <span class="count">Slide 1 of 1</span>
  <svg class="ico" viewBox="0 0 28 28"><path d="M14 5v19M14 5C10 3 6 3 2 4v18h12M14 5c4-2 8-2 12-1v18h-4l-3 4-3-4h-2" fill="none" stroke="#555" stroke-width="1.8"/></svg>
  <button class="d-flex align-items-center a11y"><svg class="ico" viewBox="0 0 28 28"><circle cx="14" cy="4" r="3" fill="none" stroke="#444" stroke-width="1.8"/><path d="M3 8l8 3h6l8-3M11 11v7l-4 9M17 11v5M14 16l12 11M26 16 14 27" fill="none" stroke="#444" stroke-width="2"/></svg>Accessibility: Investigate</button>
  <button class="d-flex align-items-center ms-auto notes"><svg class="ico" viewBox="0 0 28 28"><path d="M8 8l6-6 6 6M1 13h26M1 19h26M1 25h26" fill="none" stroke="#444" stroke-width="2"/></svg>Notes</button>
  <button class="view on" aria-label="Normal"><svg class="ico" viewBox="0 0 28 28"><path d="M2 4h24v20H2zM8 4v16M2 20h24M12 9h9v6h-9z" fill="none" stroke="#444" stroke-width="2"/></svg></button>
  <button class="view" aria-label="Slide sorter"><svg class="ico" viewBox="0 0 28 28"><path d="M3 4h9v8H3zM16 4h9v8h-9zM3 17h9v8H3zM16 17h9v8h-9z" fill="none" stroke="#444" stroke-width="2"/></svg></button>
  <button class="view" aria-label="Reading view"><svg class="ico" viewBox="0 0 28 28"><path d="M14 5v19M14 5c-4-2-8-2-11-1v18c4 0 8 0 11 2M14 5c4-2 8-2 11-1v18c-4 0-8 0-11 2M6 9h5M6 13h5M6 17h5M17 9h5M17 13h5M17 17h5" fill="none" stroke="#444" stroke-width="1.8"/></svg></button>
  <button class="view" aria-label="Slide show"><svg class="ico" viewBox="0 0 28 28"><path d="M2 3h24M5 3v13h18V3M14 16v9M8 25h12M11 9h6" fill="none" stroke="#444" stroke-width="2"/></svg></button>
  <span class="minus">−</span><input class="zoom-range ms-2 me-2" type="range" min="0" max="200" value="100" aria-label="Zoom"><span>+</span>
  <span class="pct">100%</span>
  <svg class="ico fit" viewBox="0 0 28 28"><path d="M8 9h12v10H8zM10 5l4-4 4 4M10 23l4 4 4-4M4 10l-4 4 4 4M24 10l4 4-4 4" fill="none" stroke="#444" stroke-width="2"/></svg>
</footer>

<div class="paste-menu"><h6>Paste Options:</h6>
 <div class="opts d-flex">
  <button aria-label="Use destination theme"><svg viewBox="0 0 50 52"><use href="#clip" width="50" height="50"/><path d="M20 18h26v32H20z" fill="#fff"/><text x="24" y="40" font-size="27" fill="#555">a</text><path d="M20 43h6v6h-6z" fill="#e03c3c"/><path d="M29 43h6v6h-6z" fill="#d06a10"/><path d="M38 43h6v6h-6z" fill="#1f7ac2"/></svg></button>
  <button aria-label="Keep source formatting"><svg viewBox="0 0 50 52"><use href="#clip" width="50" height="50"/><path d="M8 17h22M8 31h15" stroke="#2b88d8" stroke-width="2"/><path d="M8 24h18M8 38h9" stroke="#e05050" stroke-width="2"/><path d="M22 35 44 16c4-2 5 1 3 4L29 41z" fill="#ddd" stroke="#555" stroke-width="2"/><path d="M6 48c9 0 6-11 16-12l7 6c-4 10-16 10-23 6z" fill="#4aa0e6" stroke="#1f7ac2"/></svg></button>
  <button aria-label="Picture"><svg viewBox="0 0 50 52"><use href="#clip" width="50" height="50"/><path d="M13 27h34v23H13z" fill="#fff" stroke="#444" stroke-width="2.5"/><path d="M14 49l11-15 7 9 4-4 10 10z" fill="#4aa0e6" stroke="#1f7ac2"/><circle cx="39" cy="33" r="2.5" fill="#e8912d"/></svg></button>
 </div><button class="sp">Paste <u>S</u>pecial...</button></div>

<svg class="marks" viewBox="0 0 420 620"><g fill="none" stroke="#fb2406" stroke-width="10"><path d="M99 83h104v44H99z"/><path d="M28 135h92v146H28z"/><path d="M41 329h106v78H41z"/><path d="M161 411l222 168" stroke-width="11"/><path d="M392 565 369 595l39 7z" fill="#fb2406" stroke="none"/></g></svg>
<svg class="cam" viewBox="0 0 78 78"><circle cx="39" cy="39" r="37" fill="#c85f62" stroke="#5c2b2d" stroke-width="3"/><rect x="16" y="36" width="46" height="27" rx="3" fill="#e8b8b9"/><circle cx="39" cy="48" r="12" fill="#d07a7c" stroke="#f6dede" stroke-width="3"/><circle cx="39" cy="48" r="5" fill="#efc9ca"/></svg>
<svg class="cur" viewBox="0 0 18 18"><path d="M7 0v9H2l7 8 7-8h-5V0" fill="#fff" stroke="#333" stroke-width="1.8"/></svg>

<script>
/* left, middle, right, top, bottom, anchor side, first text line y, text lines, text class */
const cards=[
[443,578,712,663,753,'b',685,'Community Engaged and|Benefited|3/30/24'],
[708,835,962,683,744,'b',700,'Local Economy Stimulated|4/15/24','own'],
[978,1108,1238,690,780,'b',712,'Research and Innovation|Monitored|1/1/25'],
[1196,1315,1434,634,754,'b',658,'Adaptation to Climate|Change Assessment in|Place|6/15/25'],
[1450,1540,1630,687,777,'b',709,'Carbon Emission|Reduced|12/31/25'],
[1616,1722,1826,683,774,'b',705,'Grid Integrated and|Power Stable|6/1/26'],
[1864,1957,2048,683,774,'b',705,'Grid Reliable and|Resilient|10/15/26'],
[428,509,588,873,933,'t',892,'Project Started|1/1/24'],
[563,658,751,876,967,'t',898,'Health and Safety|Optimized|3/15/24'],
[752,883,1016,874,965,'t',897,'Social and Environmental|Justice Promoted|3/15/24'],
[1117,1216,1315,900,990,'t',922,'Renewable Energy|Capacity Obtained|4/1/25'],
[1431,1540,1649,847,908,'t',866,'Electricity Generated|12/31/25'],
[1577,1701,1824,901,992,'t',923,'Environmental|Stewardship Confirmed|5/15/26'],
[1804,1937,2070,859,950,'t',881,'Long-Term Asset|Management Established|10/15/26'],
[479,601,724,1150,1240,'t',1172,'Regulatory Compliance|Established|3/1/24'],
[783,917,1052,1148,1239,'t',1170,'Education and Awareness|Promoted|3/1/24'],
[623,747,872,1249,1339,'t',1271,'Monitoring and|Reporting Standardized|3/1/24'],
[1030,1146,1262,1118,1208,'t',1141,'Stakeholders Satisfied|and Involved|4/1/24'],
[1508,1622,1737,1101,1192,'t',1124,'Visual and Landscape|Integrated|8/1/26'],
[1783,1903,2021,1131,1250,'t',1156,'Decommissioning and|Site Restoration Plan|Developed|11/1/26'],
[1681,1794,1907,1274,1334,'t',1293,'Operation Optimized|8/1/26']];
const ticks=[["Jan '24",671,705,737],["Apr '24",783,815,848],["Jul '24",888,919,947],["Oct '24",998,1031,1065],["Jan '25",1107,1139,1171],["Apr '25",1214,1246,1280],["Jul '25",1322,1352,1380],["Oct '25",1431,1464,1499],["Jan '26",1541,1572,1604],["Apr '26",1646,1680,1713],["Jul '26",1754,1784,1812],["Oct '26",1862,1896,1930],["Jan '27",1972,2004,2035]];
let T='',L='',H='',D='';
const use=(id,x,y)=>`<use href="#${id}" x="${x}" y="${y}"/>`;
const ln=(x1,y1,x2,y2,c='#707070',w=2)=>`<path d="M${x1} ${y1}L${x2} ${y2}" stroke="${c}" stroke-width="${w}"/>`;
const txt=(x,y,s,c='')=>`<text x="${x}" y="${y}" class="${c}">${s}</text>`;
const box=(l,r,t,b)=>`<path d="M${l} ${t}H${r}V${b}H${l}Z" fill="none" stroke="#707070" stroke-width="2"/>`;
for(const y of [806,1028]){L+=`<path d="M678 ${y}H2005v21H678z" fill="#5b9bd5" stroke="#4d6f92" stroke-width="2"/>`;
 L+=ln(1340,y-58,1340,y+21);H+=use('hd',1340,y+21)+use('rot',1340,y-58)+use('hd',2005,y+21);
 L+=box(574,666,y-6,y+48)+box(2014,2086,y-6,y+48)+ln(620,y-63,620,y-6)+ln(2050,y-63,2050,y+118);
 for(const yy of [y-6,y+21,y+48])H+=use('hd',574,yy)+use('hd',666,yy)+use('hd',2014,yy)+use('hd',2086,yy);
 H+=use('hd',620,y-6)+use('hd',620,y+48)+use('hd',2050,y-6)+use('hd',2050,y+48)+use('rot',620,y-63)+use('rot',2050,y-63)+use('mv',2050,y+117);
 T+=txt(666,y+16,'Start','dt rt')+txt(666,y+39,'1/1/24','dt rt')+txt(2014,y+16,'Finish','dt lt')+txt(2082,y+39,'11/27/27','dt rt');
 for(const [s,l,m,r] of ticks){T+=txt(m,y-10,s,'tick');
  L+=box(l,r,y-30,y)+ln(m,y-88,m,y-30)+ln(m,y,m,y+48);
  H+=use('rot',m,y-89)+use('mv',m,y+69);
  for(const [a,b] of [[l,-30],[m,-30],[r,-30],[l+1,-22],[l+1,0],[m,0],[r,0]])H+=use('hd',a,y+b);}
}
/* milestone markers: x positions, dot y, above or below the bar */
const marks=(xs,y,up)=>xs.forEach(x=>{L+=ln(x,y-72,x,y+62);H+=use('mv',x,y+(up?84:73));
 const o=up?[[-17,-6],[17,-6],[0,-15],[-11,14],[11,14]]:[[-15,4],[15,4],[-11,-17],[11,-17]];
 H+=use('rot',x,y-(up?64:75));o.forEach(([a,b])=>H+=use('hd',x+a,y+b));H+=`<circle cx="${x}" cy="${y}" r="12" fill="#fff"/>`;D+=use('dot',x,y);});
marks([781,835,1108,1305,1540,1722,1883],796,true);
marks([675,762,1216,1540,1701,1883],839,false);
marks([747,783,1794,1903],1061,false);
for(const [l,m,r,t,b,side,y,s,cls=''] of cards){
 const mid=(t+b)>>1;L+=box(l,r,t,b)+ln(m,t-58,m,t);
 for(const yy of [t,mid,b])H+=use('hd',l,yy)+use('hd',r,yy);
 H+=use('hd',m,side=='t'?b:t)+use('rot',m,t-58);D+=use('dot',m,side=='t'?t:b+2);
 const a=s.split('|');a.forEach((w,i)=>T+=txt(m,y+7+i*25-(i==a.length-1?1:0),w,(i==a.length-1?'dt ':'')+cls));
}
for(const c of [[578,755,781,796],[835,745,835,796],[1315,755,1305,796],[1957,776,1883,796],[509,873,675,839],[658,876,762,839],[762,839,883,874],[1216,839,1216,900],[1701,839,1701,902],[1883,839,1937,860],[747,1061,601,1150],[747,1061,917,1148],[783,1061,1146,1118],[747,1061,747,1249],[1794,1061,1622,1101],[1794,1061,1794,1274],[1903,1061,1903,1131]])L+=ln(...c,'#3c3c3c',2);
L+='<rect x="650" y="737" width="86" height="27" rx="10" fill="#357a36"/>'+ln(693,764,693,1076,'#111',2)+ln(693,1076,693,1130);
T+=txt(693,757,'Today','dt today');
for(const [a,b] of [[650,737],[693,737],[736,737],[650,764],[693,765],[736,764],[712,753],[705,743],[711,832],[711,850],[673,1054],[711,1054],[673,1072],[711,1072],[693,1076]])H+=use('hd',a,b);
H+=use('rot',693,680)+use('rot',693,1005)+use('mv',692,1140);
document.getElementById('scene').innerHTML=L+T+H+D;
</script>
</body>
</html>
